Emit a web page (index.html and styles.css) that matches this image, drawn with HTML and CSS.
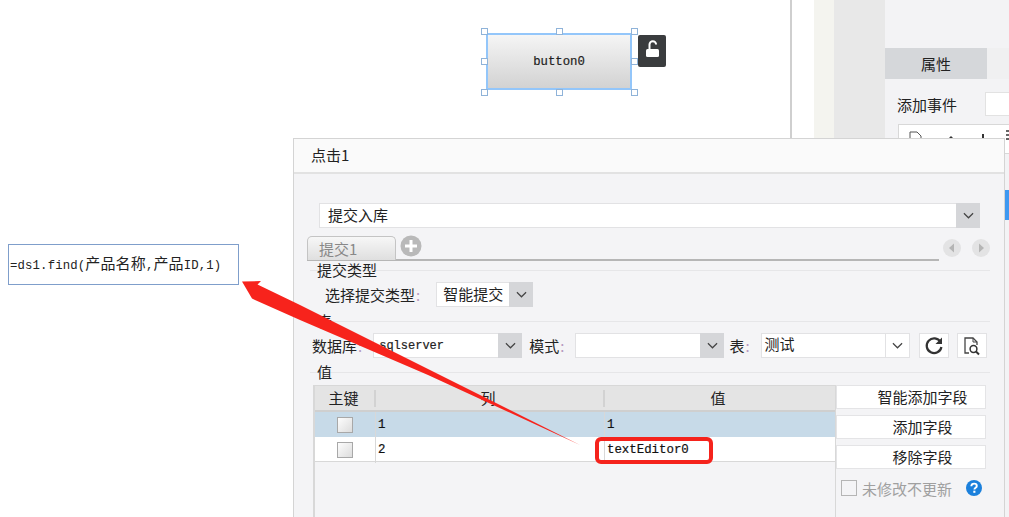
FILE: index.html
```html
<!DOCTYPE html>
<html lang="zh">
<head>
<meta charset="utf-8">
<title>点击1</title>
<link rel="stylesheet" href="styles.css">
</head>
<body>
<div class="desktop">
  <div class="backdrop">
    <div class="canvas-area"></div>
    <div class="gutter"></div>
    <div class="strip-a"></div>
    <div class="strip-b"></div>
    <div class="props">
      <div class="props-top"></div>
      <div class="props-tabs"><div class="props-tab">属性</div></div>
      <div class="event-row"><span>添加事件</span><div class="event-input"></div></div>
      <div class="toolbar">
        <svg class="tool-svg" width="111" height="14" viewBox="0 0 111 14">
          <path d="M11 13V3h7l4 4v6" fill="#fff" stroke="#555"/>
          <path d="M46 13l6-6 6 6z" fill="#333"/>
          <path d="M84 5v9" stroke="#333" stroke-width="2"/>
          <path d="M107 2h3M107 6h3M107 10h3" stroke="#666" stroke-width="2"/>
        </svg>
      </div>
    </div>
  </div>

  <div class="widget">
    <div class="widget-btn">button0</div>
    <i class="handle h-tl"></i><i class="handle h-tc"></i><i class="handle h-tr"></i>
    <i class="handle h-ml"></i><i class="handle h-mr"></i>
    <i class="handle h-bl"></i><i class="handle h-bc"></i><i class="handle h-br"></i>
    <div class="lock">
      <svg width="20" height="20" viewBox="0 0 20 20">
        <path d="M7.500 10V5.500a3.300 3.300 0 0 1 6.600 0" fill="none" stroke="#fff" stroke-width="2"/>
        <rect x="4" y="10" width="13" height="8" rx="1.500" fill="#fff"/>
      </svg>
    </div>
  </div>

  <div class="formula">=ds1.find(<span class="cjk">产品名称</span>,<span class="cjk">产品</span>ID,1)</div>

  <div class="dialog">
    <div class="dialog-head">点击1</div>
    <div class="dialog-body">
      <div class="combo combo-action">
        <div class="combo-text">提交入库</div>
        <div class="combo-arrow grey"><svg class="chev" viewBox="0 0 12 7"><path d="M1 1l5 5 5-5"/></svg></div>
      </div>

      <div class="tabbar">
        <div class="tabline">
          <div class="tab">提交1</div>
          <svg class="plus" width="22" height="22" viewBox="0 0 22 22"><circle cx="11" cy="11" r="10.500" fill="#b9b9b9"/><path d="M11 5v12M5 11h12" stroke="#fff" stroke-width="3"/></svg>
        </div>
        <div class="tabnav">
          <svg width="18" height="18" viewBox="0 0 18 18"><circle cx="9" cy="9" r="9" fill="#e3e3e4"/><path d="M11 4.500v9L6 9z" fill="#b5b5b5"/></svg>
          <svg width="18" height="18" viewBox="0 0 18 18"><circle cx="9" cy="9" r="9" fill="#e3e3e4"/><path d="M7 4.500v9L12 9z" fill="#b5b5b5"/></svg>
        </div>
      </div>

      <section class="group group-type">
        <h3 class="group-title">提交类型</h3>
        <div class="row row-type">
          <label class="lbl">选择提交类型<em>:</em></label>
          <div class="combo combo-type">
            <div class="combo-text">智能提交</div>
            <div class="combo-arrow grey"><svg class="chev" viewBox="0 0 12 7"><path d="M1 1l5 5 5-5"/></svg></div>
          </div>
        </div>
      </section>

      <section class="group">
        <h3 class="group-title">表</h3>
        <div class="row row-table">
          <label class="lbl">数据库<em>:</em></label>
          <div class="combo combo-db">
            <div class="combo-text mono">sqlserver</div>
            <div class="combo-arrow grey"><svg class="chev" viewBox="0 0 12 7"><path d="M1 1l5 5 5-5"/></svg></div>
          </div>
          <label class="lbl lbl-mode">模式<em>:</em></label>
          <div class="combo combo-db combo-mode">
            <div class="combo-text"></div>
            <div class="combo-arrow grey"><svg class="chev" viewBox="0 0 12 7"><path d="M1 1l5 5 5-5"/></svg></div>
          </div>
          <label class="lbl lbl-tbl">表<em>:</em></label>
          <div class="combo combo-tbl">
            <div class="combo-text tbl-text">测试</div>
            <div class="combo-arrow white"><svg class="chev" viewBox="0 0 12 7"><path d="M1 1l5 5 5-5"/></svg></div>
          </div>
          <div class="icon-btn btn-refresh">
            <svg width="20" height="20" viewBox="0 0 20 20"><path d="M16.500 6A7.400 7.400 0 1 0 17.400 11" fill="none" stroke="#333" stroke-width="2.200"/><path d="M18 1.500V8h-6.500z" fill="#333"/></svg>
          </div>
          <div class="icon-btn">
            <svg width="18" height="20" viewBox="0 0 18 20"><path d="M6 17H2V2h8l4 4v3" fill="none" stroke="#444" stroke-width="1.300"/><path d="M10 2v4h4" fill="none" stroke="#444"/><circle cx="10.500" cy="13" r="3.400" fill="none" stroke="#333" stroke-width="1.500"/><path d="M13 15.500l3 3" stroke="#333" stroke-width="2"/></svg>
          </div>
        </div>
      </section>

      <section class="group">
        <h3 class="group-title">值</h3>
        <div class="fields">
          <div class="grid">
            <div class="grid-head">
              <div class="gh">主键</div>
              <div class="gh">列</div>
              <div class="gh">值</div>
            </div>
            <div class="grid-row selected">
              <div class="gc center"><i class="check"></i></div>
              <div class="gc">1</div>
              <div class="gc">1</div>
            </div>
            <div class="grid-row">
              <div class="gc center"><i class="check"></i></div>
              <div class="gc">2</div>
              <div class="gc">textEditor0</div>
            </div>
          </div>
          <div class="side">
            <div class="side-btn">智能添加字段</div>
            <div class="side-btn">添加字段</div>
            <div class="side-btn">移除字段</div>
            <div class="side-opt">
              <i class="opt-check"></i>
              <span>未修改不更新</span>
              <svg class="help" width="16" height="16" viewBox="0 0 16 16"><circle cx="8" cy="8" r="8" fill="#1b80dc"/><path d="M5.300 6.200C5.400 4.500 6.600 3.600 8.100 3.600c1.600 0 2.700 1 2.700 2.300 0 1.900-2.400 1.900-2.400 3.700" fill="none" stroke="#fff" stroke-width="1.900"/><rect x="7.300" y="10.700" width="2.100" height="2.100" fill="#fff"/></svg>
            </div>
          </div>
        </div>
      </section>
    </div>
  </div>

  <div class="scroll-thumb"></div>

  <div class="redbox"></div>
  <svg class="arrow" width="1009" height="517" viewBox="0 0 1009 517">
    <path d="M242 281.500 L261 281 L257.500 284.500 L300 305 L580 445 L428 375 L300 320 L255 300 L252 298.500 Z" fill="#f7231c"/>
  </svg>
</div>
</body>
</html>
```
FILE: styles.css
```css
* { box-sizing: border-box; }
html, body { margin: 0; padding: 0; }
body {
  width: 1009px;
  height: 517px;
  overflow: hidden;
  background: #fff;
  font-family: "Noto Sans CJK SC", "Liberation Sans", sans-serif;
  font-size: 15px;
  color: #222;
}
.desktop { position: relative; width: 1009px; height: 517px; overflow: hidden; }

/* window behind the dialog */
.backdrop { position: absolute; inset: 0; display: flex; }
.canvas-area { flex: none; width: 792px; border-right: 2px solid #cfcfcf; }
.gutter { flex: none; width: 22px; }
.strip-a { flex: none; width: 20px; background: #f4f4ef; }
.strip-b { flex: none; width: 51px; background: #e8e8e8; }
.props { flex: 1; min-width: 0; overflow: hidden; background: #f3f3f5; }
.props-top { height: 48px; }
.props-tabs { height: 31px; background: #f0f0f1; }
.props-tab {
  width: 102px; height: 31px; line-height: 31px; text-align: center;
  background: #d5d7da;
}
.event-row { display: flex; align-items: center; padding: 13px 0 0 12px; height: 37px; }
.event-row span { width: 88px; flex: none; }
.event-input { flex: none; width: 40px; height: 24px; background: #fff; border: 1px solid #e2e2e2; }
.toolbar {
  margin: 8px 0 0 13px; height: 30px; width: 130px;
  background: #fff; border: 1px solid #d8d8d8;
}
.tool-svg { display: block; margin-top: 4px; }

/* selected widget */
.widget { position: absolute; left: 486px; top: 33px; width: 146px; height: 57px; }
.widget-btn {
  width: 100%; height: 100%;
  border: 2px solid #93c6fa;
  background: linear-gradient(#f5f5f5, #d2d2d2);
  display: flex; align-items: center; justify-content: center;
  font: 12.300px "Liberation Mono", monospace;
  -webkit-text-stroke: .2px #222;
  color: #222;
}
.handle {
  position: absolute; width: 7px; height: 7px;
  background: #fff; border: 1px solid #8fb3d9;
}
.h-tl { left: -5px; top: -5px; }
.h-tc { left: 70px; top: -5px; }
.h-tr { left: 145px; top: -5px; }
.h-ml { left: -5px; top: 25px; }
.h-mr { left: 145px; top: 25px; }
.h-bl { left: -5px; top: 56px; }
.h-bc { left: 70px; top: 56px; }
.h-br { left: 145px; top: 56px; }
.lock {
  position: absolute; left: 152px; top: 2px; width: 28px; height: 32px;
  background: #3a3c3e; border-radius: 2px;
  display: flex; justify-content: center; padding-top: 4px;
}

/* formula note */
.formula {
  position: absolute; left: 8px; top: 244px; width: 231px; height: 41px;
  border: 1px solid #7f9ecb; background: #fff;
  padding-left: 1px; white-space: nowrap;
  font: 12.300px/43px "Liberation Mono", monospace;
  letter-spacing: .15px;
  color: #222;
}
.cjk { font: 15px "Noto Sans CJK SC", sans-serif; }

/* dialog */
.dialog {
  position: absolute; left: 293px; top: 138px; width: 712px; height: 379px;
  background: #f4f4f6;
  border: 1px solid #d4d4d4; border-bottom: 0;
}
.dialog-head {
  height: 35px; background: #fafafa; border-bottom: 2px solid #e2e2e2;
  padding-left: 17px; line-height: 32px;
}
.dialog-body { display: flow-root; }

.combo { display: flex; height: 25px; background: #fff; border: 1px solid #e2e2e4; }
.combo-text { flex: 1; min-width: 0; line-height: 21px; padding-left: 8px; white-space: nowrap; overflow: hidden; }
.combo-arrow { width: 24px; flex: none; display: flex; align-items: center; justify-content: center; margin: -1px -1px -1px 0; }
.combo-arrow.grey { background: #d5d6d9; }
.combo-arrow.white { background: #fff; border-left: 1px solid #e2e2e4; margin: 0; }
.chev { width: 11px; height: 7px; fill: none; stroke: #444; stroke-width: 1.300; }

.combo-action { margin: 29px 0 0 25px; width: 661px; }

.tabbar { display: flex; margin: 8px 0 0 13px; height: 25px; width: 684px; }
.tabline {
  width: 632px; display: flex; gap: 4px;
  border-bottom: 2px solid #b6b6b6;
}
.tab {
  width: 89px; height: 24px; margin-bottom: -1px;
  border: 1px solid #c4c4c4; border-bottom: 0; border-radius: 5px 5px 0 0;
  background: linear-gradient(#f7f7f7, #dfdfdf);
  color: #888; padding-left: 11px; line-height: 24px;
}
.plus { margin-top: -1px; }
.tabnav { display: flex; gap: 11px; margin: 3px 0 0 4px; }

.group { margin: 14px 0 0 16px; width: 680px; border-top: 1px solid #e6e6e8; }
.group-type { margin-top: 9px; }
.group-title {
  margin: -9px 0 0 7px; height: 18px; line-height: 16px;
  font-size: 15px; font-weight: 400; color: #222;
}
.row { display: flex; align-items: center; height: 25px; margin-top: 2px; }
.row-type { padding-left: 15px; }
.row-table { padding-left: 2px; }
.lbl { white-space: nowrap; line-height: 24px; }
.lbl em { font-style: normal; color: #b79ac0; margin-left: 1px; }

.combo-type { width: 97px; margin-left: 16px; }
.combo-type .combo-text { padding-left: 6px; }
.combo-db { width: 149px; margin-left: 11px; }
.combo-text.mono {
  font: 12px/24px "Liberation Mono", monospace;
  padding-left: 5px;
  -webkit-text-stroke: .2px #222;
}
.lbl-mode { margin-left: 7px; }
.combo-mode { margin-left: 11px; }
.lbl-tbl { margin-left: 5px; }
.combo-tbl { width: 149px; margin-left: 11px; }
.combo-tbl .tbl-text { padding-left: 3px; line-height: 19px; }
.icon-btn {
  width: 30px; height: 25px; margin-left: 8px;
  background: #fff; border: 1px solid #e2e2e4;
  display: flex; align-items: center; justify-content: center;
}
.btn-refresh { margin-left: 9px; }

.fields { display: flex; margin: 3px 0 0 3px; }
.grid {
  width: 523px; height: 140px;
  border: solid #d8d8d8; border-width: 1px 1px 0 2px;
}
.grid-head {
  display: grid; grid-template-columns: 60px 229px 1fr;
  height: 26px; background: #e4e4e4; border-bottom: 2px solid #cfcfcf;
  line-height: 24px;
}
.gh { text-align: center; position: relative; padding-right: 3px; }
.gh + .gh::before {
  content: ""; position: absolute; left: -1px; top: 4px; bottom: 3px; width: 2px; background: #d2d2d2;
}
.grid-row {
  display: grid; grid-template-columns: 60px 229px 1fr;
  height: 25px; background: #fff; border-bottom: 1px solid #d8d8d8;
}
.grid-row.selected { background: #c7dae8; border-bottom: 0; }
.gc {
  border-left: 1px solid #d8d8d8; padding-left: 2px;
  font: 12.400px/26px "Liberation Mono", monospace;
  -webkit-text-stroke: .2px #111;
  color: #111;
}
.gc.center { display: flex; align-items: center; justify-content: center; border-left: 0; padding-left: 0; }
.check {
  width: 16px; height: 16px;
  background: linear-gradient(135deg, #fdfdfd, #dcdcdc);
  border: 1px solid #a8a8a8;
}

.side { width: 150px; display: flex; flex-direction: column; gap: 6px; }
.side-btn {
  height: 24px; background: #fff; border: 1px solid #e4e4e6;
  text-align: center; line-height: 21px; padding-left: 23px;
}
.side-opt { display: flex; align-items: center; margin-top: 4px; padding-left: 5px; color: #a0a0a0; height: 18px; }
.opt-check { width: 16px; height: 16px; border: 1px solid #b5b5b5; margin-right: 5px; }
.help { margin-left: 14px; }

.scroll-thumb { position: absolute; left: 1005px; top: 190px; width: 4px; height: 30px; background: #3d98f1; }

/* annotations */
.redbox {
  position: absolute; left: 595px; top: 437px; width: 118px; height: 27px;
  border: 4px solid #f5231c; border-radius: 6px;
}
.arrow { position: absolute; left: 0; top: 0; pointer-events: none; }
```
